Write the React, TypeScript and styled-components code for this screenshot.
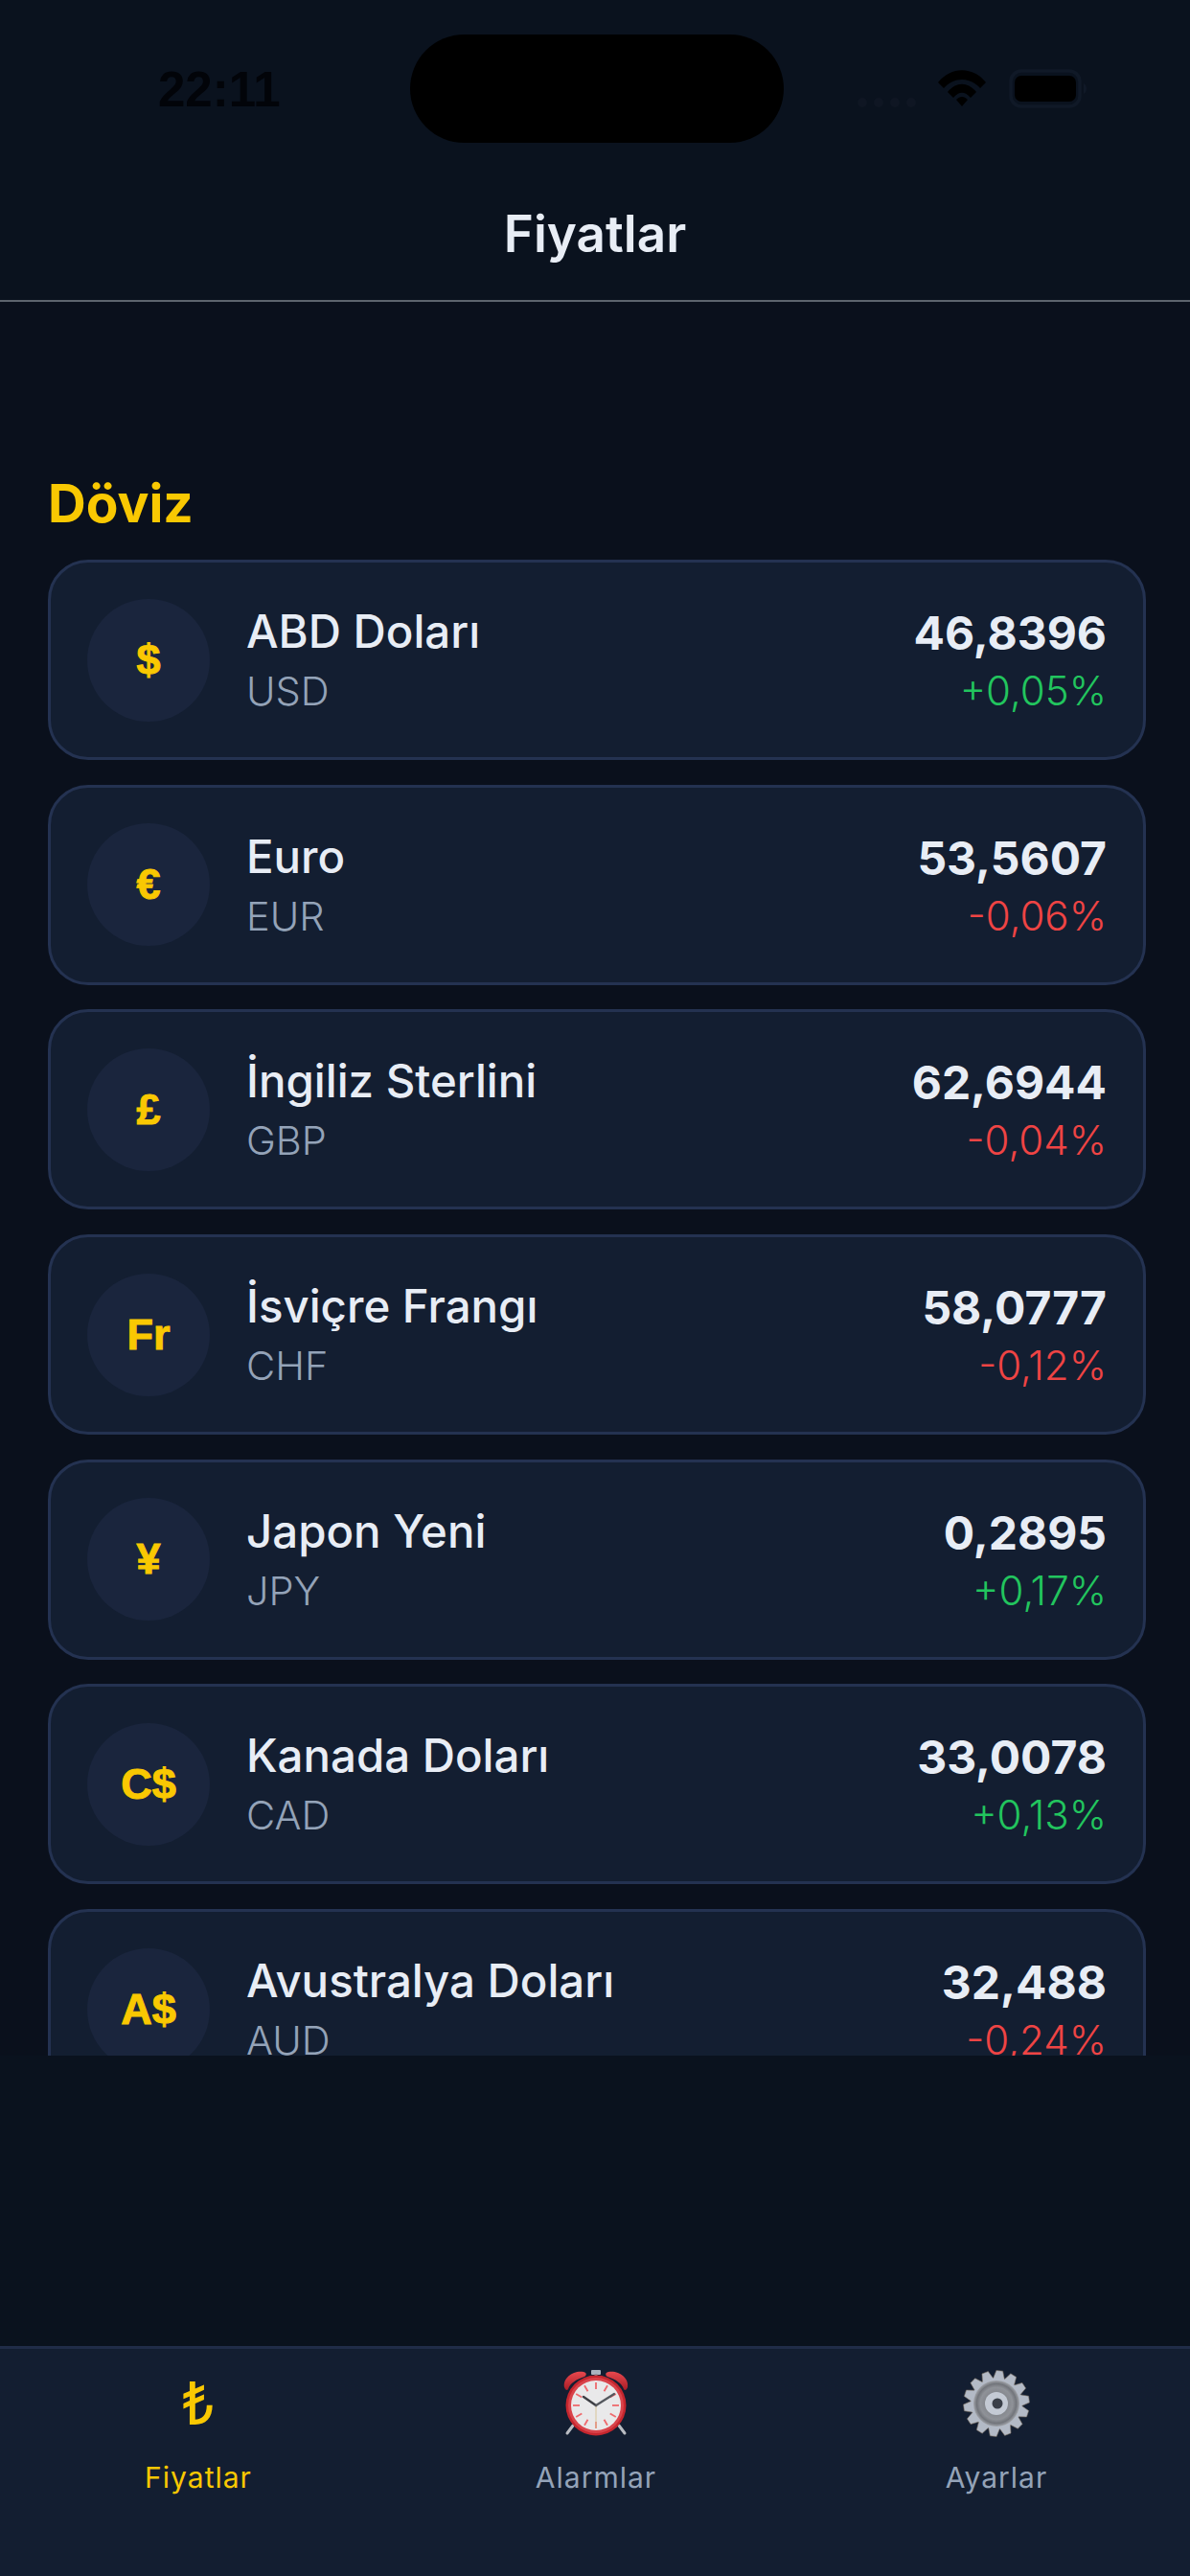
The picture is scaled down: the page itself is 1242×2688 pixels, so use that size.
import * as React from 'react';
import styled, { createGlobalStyle } from 'styled-components';

const GlobalStyle = createGlobalStyle`
  html, body {
    margin: 0;
    padding: 0;
    background: #0a121e;
  }

  * {
    box-sizing: border-box;
  }
`;

const Screen = styled.div`
  display: flex;
  flex-direction: column;
  width: 1242px;
  height: 2688px;
  overflow: hidden;
  background: #0a121e;
  font-family: Inter, "Noto Sans", sans-serif;
`;

const Header = styled.header`
  flex: 0 0 auto;
  height: 315px;
  border-bottom: 2px solid #5d646e;
`;

const StatusBar = styled.div`
  display: flex;
  align-items: center;
  height: 113px;
  margin-top: 36px;
  padding-left: 165px;
`;

const Time = styled.div`
  flex: 0 0 263px;
  padding-top: 3px;
  color: #020409;
  font-family: "Liberation Sans", Arial, sans-serif;
  font-size: 51px;
  font-weight: 700;
  line-height: 50px;
`;

const Island = styled.div`
  flex: 0 0 390px;
  height: 113px;
  border-radius: 57px;
  background: #000;
`;

const StatusIcons = styled.div`
  display: flex;
  align-items: flex-end;
  height: 42px;
  margin-left: 77px;
`;

const Title = styled.h1`
  margin: 64px 0 0;
  color: #e8edf5;
  font-size: 53px;
  font-weight: 600;
  line-height: 62px;
  text-align: center;
`;

const ScrollArea = styled.main`
  flex: 0 0 auto;
  height: 1830px;
  overflow: hidden;
  padding: 0 46px 0 50px;
  background: #0a101c;
`;

const SectionTitle = styled.h2`
  margin: 176px 0 0;
  color: #f9c802;
  font-size: 55px;
  font-weight: 700;
  line-height: 68px;
`;

const CardList = styled.div`
  display: flex;
  flex-direction: column;
  gap: 25.7px;
  margin-top: 25px;
`;

const Card = styled.article`
  display: flex;
  flex: 0 0 auto;
  align-items: center;
  height: 209px;
  padding: 0 38px 0 38px;
  border: 3px solid #243251;
  border-radius: 42px;
  background: #131e31;
`;

const Badge = styled.div`
  display: flex;
  flex: 0 0 auto;
  align-items: center;
  justify-content: center;
  width: 128px;
  height: 128px;
  border-radius: 50%;
  background: #1a253d;
  color: #f9c802;
  font-family: "Liberation Sans", Arial, sans-serif;
  font-size: 45px;
  font-weight: 700;
  -webkit-text-stroke: 1px #f9c802;
`;

const Names = styled.div`
  flex: 1 1 auto;
  margin-left: 38px;
  padding-top: 3px;
`;

const Name = styled.div`
  color: #e8edf5;
  font-size: 47.4px;
  font-weight: 500;
  line-height: 59px;
`;

const Code = styled.div`
  margin-top: 4px;
  color: #94a3b8;
  font-size: 41.5px;
  font-weight: 300;
  line-height: 59px;
`;

const Quote = styled.div`
  flex: 0 0 auto;
  padding-top: 4px;
  text-align: right;
`;

const Rate = styled.div`
  color: #e8edf5;
  font-size: 48px;
  font-weight: 700;
  line-height: 59px;
`;

const Change = styled.div<{ $up: boolean }>`
  margin-top: 1px;
  color: ${p => (p.$up ? '#22c55e' : '#ef4444')};
  font-size: 42px;
  font-weight: 300;
  line-height: 59px;
`;

const Spacer = styled.div`
  flex: 1 1 auto;
`;

const TabBar = styled.nav`
  display: grid;
  flex: 0 0 auto;
  grid-template-columns: 414px 416px 412px;
  height: 240px;
  border-top: 3px solid #202c48;
  background: #131e31;
`;

const Tab = styled.div`
  display: flex;
  flex-direction: column;
  align-items: center;
`;

const TabIcon = styled.div`
  display: flex;
  align-items: center;
  justify-content: center;
  height: 76px;
  margin-top: 19px;
  color: #f9c802;
  font-size: 62px;
  font-weight: 400;
  line-height: 76px;
`;

const TabLabel = styled.div<{ $active?: boolean }>`
  margin-top: 19px;
  color: ${p => (p.$active ? '#f9c802' : '#94a3b8')};
  font-size: 30px;
  font-weight: 400;
  letter-spacing: 1px;
  line-height: 40px;
`;

// the last tab sits a little past its column centre in the reference
const SettingsTab = styled(Tab)`
  margin-left: 4px;
  margin-right: -4px;
`;

const rows = [
  { symbol: '$', name: 'ABD Doları', code: 'USD', rate: '46,8396', change: '+0,05%', up: true },
  { symbol: '€', name: 'Euro', code: 'EUR', rate: '53,5607', change: '-0,06%', up: false },
  { symbol: '£', name: 'İngiliz Sterlini', code: 'GBP', rate: '62,6944', change: '-0,04%', up: false },
  { symbol: 'Fr', name: 'İsviçre Frangı', code: 'CHF', rate: '58,0777', change: '-0,12%', up: false },
  { symbol: '¥', name: 'Japon Yeni', code: 'JPY', rate: '0,2895', change: '+0,17%', up: true },
  { symbol: 'C$', name: 'Kanada Doları', code: 'CAD', rate: '33,0078', change: '+0,13%', up: true },
  { symbol: 'A$', name: 'Avustralya Doları', code: 'AUD', rate: '32,488', change: '-0,24%', up: false },
];

const StatusGlyphs = () => (
  <svg width="250" height="42" viewBox="0 0 250 42">
    {[0, 17, 34, 51].map(x => (
      <circle key={x} cx={x + 5} cy={35} r={5} fill="#0f1623" />
    ))}
    <path
      d="M84 14 C98 -3 120 -3 134 14 L128 20 C117 8 101 8 90 20 Z M94 24 C103 13 115 13 124 24 L118 30 C112 23 106 23 100 30 Z M103 32 C107 28 111 28 115 32 L109 39 Z"
      fill="#000"
    />
    <rect x="160" y="2" width="72" height="37" rx="11" fill="none" stroke="#101927" strokeWidth="3.5" />
    <rect x="164" y="7" width="64" height="27" rx="7" fill="#000" />
    <path d="M236 15 C240 17 240 24 236 26 Z" fill="#101927" />
  </svg>
);

const AlarmIcon = () => {
  const ticks = Array.from({ length: 12 }, (_, i) => (i * Math.PI) / 6);
  return (
    <svg width="70" height="72" viewBox="0 0 70 72">
      <defs>
        <linearGradient id="bell" x1="0" y1="0" x2="0" y2="1">
          <stop offset="0" stopColor="#e8484e" />
          <stop offset="1" stopColor="#a81d26" />
        </linearGradient>
      </defs>
      <path d="M11 59 L5 67" stroke="#b9bcc2" strokeWidth="3" strokeLinecap="round" />
      <path d="M59 59 L65 67" stroke="#b9bcc2" strokeWidth="3" strokeLinecap="round" />
      <rect x="30" y="1" width="10" height="5" rx="1" fill="#aab4c0" />
      <rect x="33.5" y="5" width="3" height="5" fill="#8d949e" />
      <path d="M2 19 C0 9 12 1 22 3 C26 4 25 7 23 8 C14 11 8 15 6 21 C5 23 3 22 2 19 Z" fill="url(#bell)" />
      <path d="M68 19 C70 9 58 1 48 3 C44 4 45 7 47 8 C56 11 62 15 64 21 C65 23 67 22 68 19 Z" fill="url(#bell)" />
      <circle cx="35" cy="38" r="31.5" fill="#c5262e" />
      <circle cx="35" cy="38" r="29" fill="#d9434a" />
      <circle cx="35" cy="38" r="26" fill="#e9e9ea" />
      {ticks.map((a, i) => (
        <line
          key={i}
          x1={35 + Math.sin(a) * 17}
          y1={38 - Math.cos(a) * 17}
          x2={35 + Math.sin(a) * 24}
          y2={38 - Math.cos(a) * 24}
          stroke="#ee6a6d"
          strokeWidth="1.8"
        />
      ))}
      <line x1="35" y1="38" x2="35" y2="62" stroke="#d8c59a" strokeWidth="1" />
      <path d="M35 38 L22 29" stroke="#3d3f44" strokeWidth="2.4" strokeLinecap="round" />
      <path d="M35 38 L54 26" stroke="#55585e" strokeWidth="2.2" strokeLinecap="round" />
    </svg>
  );
};

const gearPoints = () => {
  const teeth = 14;
  const points: string[] = [];
  for (let i = 0; i < teeth; i++) {
    const base = (i / teeth) * Math.PI * 2 - 0.12;
    const step = (Math.PI * 2) / teeth;
    [
      [27, -0.5],
      [34.5, -0.24],
      [34.5, 0.2],
      [27, 0.46],
    ].forEach(([r, f]) => {
      const a = base + f * step;
      points.push(`${(35 + Math.cos(a) * r).toFixed(2)},${(35 + Math.sin(a) * r).toFixed(2)}`);
    });
  }
  return points.join(' ');
};

const GearIcon = () => (
  <svg width="70" height="70" viewBox="0 0 70 70">
    <defs>
      <radialGradient id="disc" cx="0.5" cy="0.5" r="0.5">
        <stop offset="0" stopColor="#6f7278" />
        <stop offset="0.7" stopColor="#8f9298" />
        <stop offset="0.86" stopColor="#72757b" />
        <stop offset="1" stopColor="#a0a3a9" />
      </radialGradient>
    </defs>
    <polygon points={gearPoints()} fill="#b3bac6" stroke="#7a6f62" strokeWidth="0.6" />
    <circle cx="35" cy="35" r="24" fill="url(#disc)" />
    <circle cx="35" cy="35" r="12" fill="#c4cad4" />
    <circle cx="36" cy="35" r="5.5" fill="#3a3f48" />
  </svg>
);

export default function App() {
  return (
    <Screen>
      <GlobalStyle />
      <Header>
        <StatusBar>
          <Time>22:11</Time>
          <Island />
          <StatusIcons>
            <StatusGlyphs />
          </StatusIcons>
        </StatusBar>
        <Title>Fiyatlar</Title>
      </Header>
      <ScrollArea>
        <SectionTitle>Döviz</SectionTitle>
        <CardList>
          {rows.map(row => (
            <Card key={row.code}>
              <Badge>{row.symbol}</Badge>
              <Names>
                <Name>{row.name}</Name>
                <Code>{row.code}</Code>
              </Names>
              <Quote>
                <Rate>{row.rate}</Rate>
                <Change $up={row.up}>{row.change}</Change>
              </Quote>
            </Card>
          ))}
        </CardList>
      </ScrollArea>
      <Spacer />
      <TabBar>
        <Tab>
          <TabIcon>₺</TabIcon>
          <TabLabel $active>Fiyatlar</TabLabel>
        </Tab>
        <Tab>
          <TabIcon>
            <AlarmIcon />
          </TabIcon>
          <TabLabel>Alarmlar</TabLabel>
        </Tab>
        <SettingsTab>
          <TabIcon>
            <GearIcon />
          </TabIcon>
          <TabLabel>Ayarlar</TabLabel>
        </SettingsTab>
      </TabBar>
    </Screen>
  );
}
